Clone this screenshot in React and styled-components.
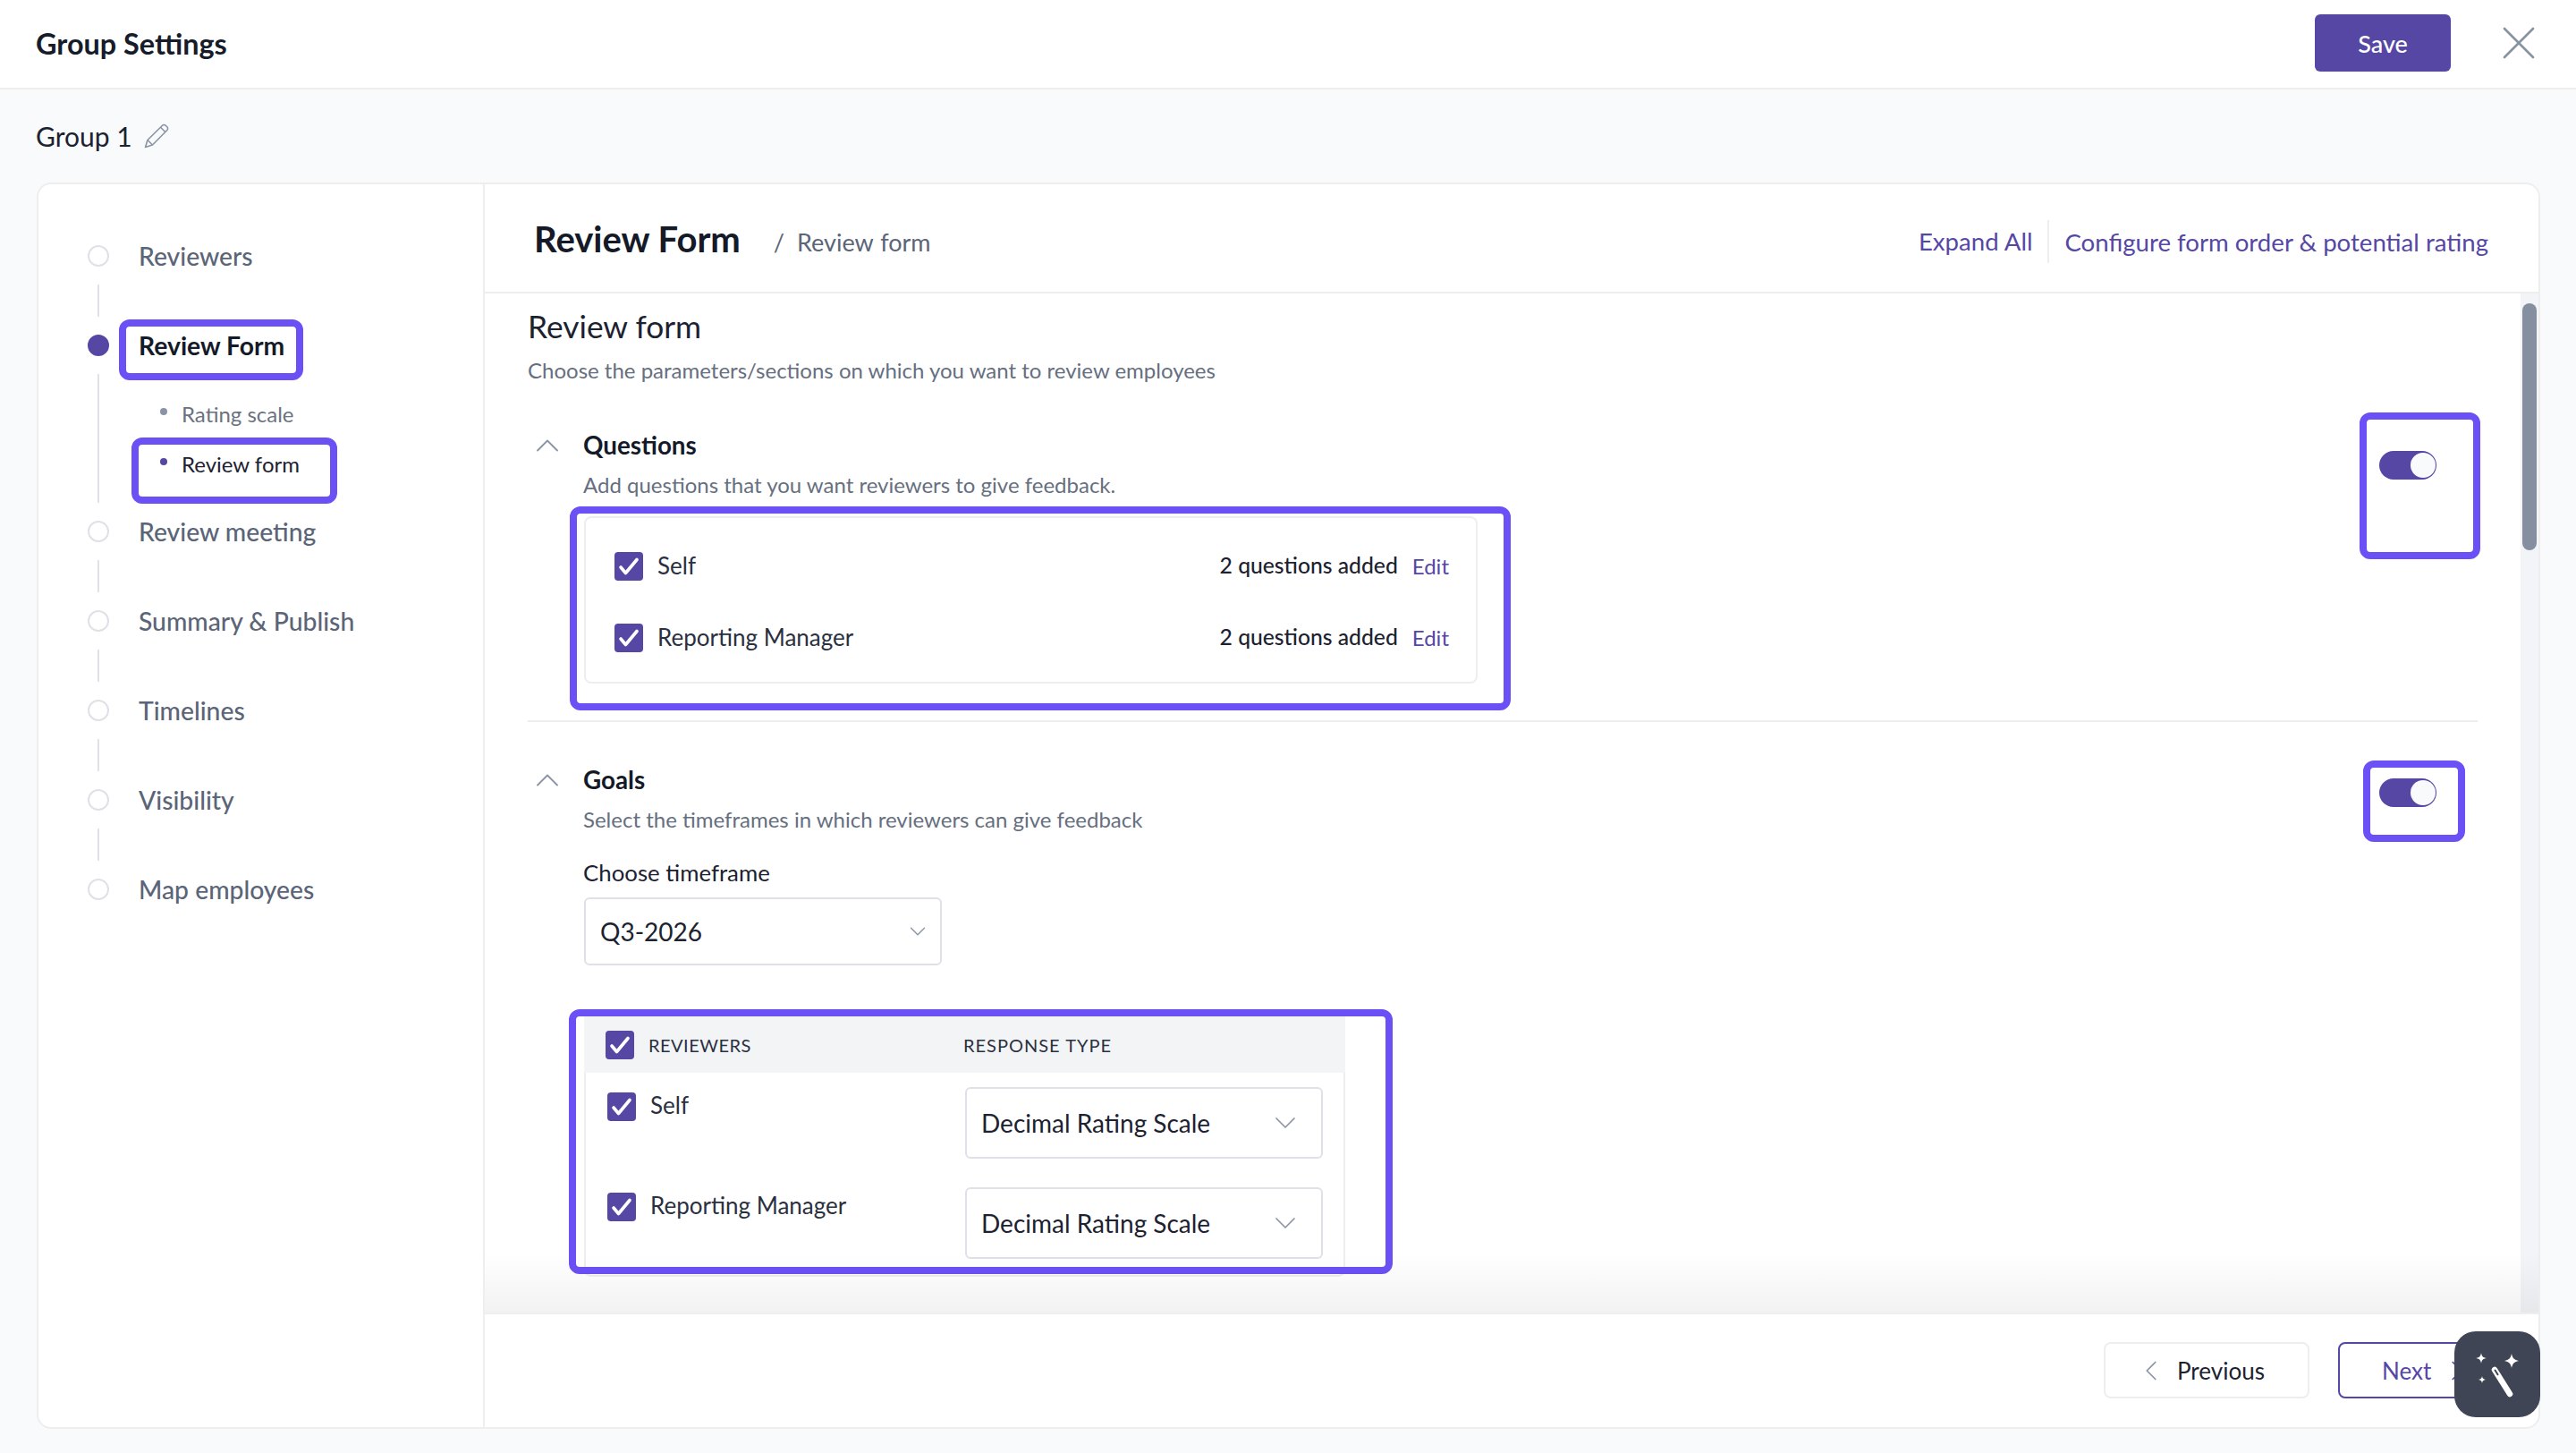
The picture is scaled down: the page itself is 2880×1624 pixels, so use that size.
import React from 'react';
import styled, { createGlobalStyle } from 'styled-components';
import { ChevronUp, ChevronDown, ChevronLeft, ChevronRight, X } from 'lucide-react';

const GlobalStyle = createGlobalStyle`
  * { box-sizing: border-box; }
  html, body { margin: 0; padding: 0; height: 100%; background: #f9fafb; overflow: hidden; }
  body { font-family: Lato, "Open Sans", sans-serif; color: #111827; }
`;

const purple = '#5647a5';
const gray = '#5b6577';
const line = '#eeeeee';

const Page = styled.div`
  width: 2880px;
  height: 1624px;
  display: flex;
  flex-direction: column;
  position: relative;
`;

const Header = styled.header`
  height: 100px;
  flex: none;
  display: flex;
  align-items: center;
  padding: 0 32px 2px 40px;
  background: #fff;
  border-bottom: 2px solid ${line};
`;

const HeaderTitle = styled.h1`
  margin: 0;
  flex: 1;
  font-size: 32.4px;
  font-weight: 700;
  color: #161c2a;
`;

const SaveButton = styled.button`
  width: 152px;
  height: 64px;
  border: none;
  border-radius: 6px;
  background: ${purple};
  color: #fff;
  font: 500 27px Lato, sans-serif;
  margin-right: 44px;
`;

const GroupRow = styled.div`
  height: 104px;
  flex: none;
  display: flex;
  align-items: center;
  gap: 13px;
  padding: 0 0 0 40px;
  font-size: 30px;
  color: #1c2230;
`;

const Card = styled.div`
  flex: none;
  height: 1393px;
  margin: 0 40px 0 41px;
  display: flex;
  background: #fff;
  border: 2px solid ${line};
  border-radius: 16px;
  overflow: hidden;
`;

const Sidebar = styled.nav`
  width: 499px;
  flex: none;
  padding: 64px 0 0 55px;
  border-right: 2px solid ${line};
`;

const StepRow = styled.div`
  height: 32px;
  display: flex;
  align-items: center;
  gap: 33px;
  position: relative;
`;

const StepDot = styled.span`
  width: 24px;
  height: 24px;
  flex: none;
  border-radius: 50%;
  background: ${({ $active }) => ($active ? purple : '#fff')};
  border: 2px solid ${({ $active }) => ($active ? purple : '#e0e1e8')};
`;

const StepLabel = styled.span`
  font-size: 28.3px;
  font-weight: ${({ $active }) => ($active ? 700 : 500)};
  color: ${({ $active }) => ($active ? '#141a28' : gray)};
`;

const Connector = styled.div`
  width: 2px;
  height: ${({ $height }) => $height || 36}px;
  margin: 16px 0 16px 11px;
  background: #e0e1e8;
  flex: none;
`;

const SubGroup = styled.div`
  display: flex;
`;

const SubList = styled.div`
  display: flex;
  flex-direction: column;
  gap: 24px;
  padding: 44px 0 0 68px;
`;

const SubRow = styled.div`
  height: 32px;
  display: flex;
  align-items: center;
  gap: 16px;
  position: relative;
  font-size: 24px;
  color: ${({ $active }) => ($active ? '#1c2230' : '#6b7280')};
`;

const SubDot = styled.span`
  width: 8px;
  height: 8px;
  border-radius: 50%;
  margin-top: -4px;
  background: ${({ $active }) => ($active ? purple : '#8a94a6')};
`;

// the bright annotation frames drawn on top of the screenshot
const Highlight = styled.div`
  position: absolute;
  left: ${({ $left }) => $left}px;
  top: ${({ $top }) => $top}px;
  width: ${({ $w }) => $w}px;
  height: ${({ $h }) => $h}px;
  border: 8px solid #6b50f6;
  border-radius: 12px;
  z-index: 5;
  pointer-events: none;
`;

const Main = styled.main`
  flex: 1;
  min-width: 0;
  display: flex;
  flex-direction: column;
`;

const MainHead = styled.div`
  height: 122px;
  flex: none;
  display: flex;
  align-items: center;
  padding: 8px 56px 0 55px;
  border-bottom: 2px solid ${line};
`;

const MainTitle = styled.h2`
  margin: -6px 0 0;
  font-size: 40px;
  font-weight: 700;
  color: #141a28;
`;

const Crumb = styled.span`
  margin-left: 37px;
  font-size: 27px;
  color: ${gray};
  flex: 1;
  word-spacing: 1px;
`;

const CrumbSlash = styled.span`
  margin-right: 14px;
`;

const HeadLink = styled.a`
  font-size: 27.6px;
  color: ${purple};
  &:first-of-type {
    padding-right: 17px;
    border-right: 2px solid ${line};
    margin-right: 17px;
    height: 48px;
    line-height: 48px;
  }
`;

const ScrollArea = styled.div`
  flex: 1;
  min-height: 0;
  display: flex;
  position: relative;
  overflow: hidden;
`;

const ScrollBody = styled.div`
  flex: 1;
  min-width: 0;
  padding: 16px 48px 0;
`;

const Track = styled.div`
  width: 20px;
  flex: none;
  padding: 11px 2px 0;
  background: #f3f4f8;
`;

const Thumb = styled.div`
  height: 276px;
  border-radius: 8px;
  background: #858f9f;
`;

const BottomFade = styled.div`
  position: absolute;
  left: 0;
  right: 0;
  bottom: 0;
  height: 66px;
  background: linear-gradient(to bottom, rgba(0, 0, 0, 0), rgba(0, 0, 0, 0.05));
  z-index: 6;
  pointer-events: none;
`;

const FormTitle = styled.h3`
  margin: 0;
  font-size: 35.3px;
  line-height: 42px;
  padding-bottom: 2px;
  font-weight: 400;
  color: #1c2230;
`;

const Hint = styled.p`
  margin: ${({ $top }) => $top}px 0 0 ${({ $indent }) => $indent || 0}px;
  font-size: 24px;
  line-height: 29px;
  padding-bottom: 3px;
  color: #666f80;
`;

const SectionHead = styled.div`
  height: 32px;
  margin-top: ${({ $top }) => $top}px;
  display: flex;
  align-items: center;
  gap: 18px;
`;

const SectionTitle = styled.span`
  font-size: 27.8px;
  font-weight: 700;
  color: #141a28;
  margin-bottom: 1px;
`;

const Toggle = styled.div`
  width: 64px;
  height: 32px;
  margin: ${({ $top }) => $top}px 46px 0 auto;
  align-self: flex-start;
  flex: none;
  border-radius: 16px;
  background: ${purple};
  position: relative;
  display: flex;
  align-items: center;
  justify-content: flex-end;
  padding-right: 1px;
`;

const Knob = styled.span`
  width: 28px;
  height: 28px;
  border-radius: 50%;
  background: #f9fafb;
`;

const QuestionBox = styled.div`
  width: 999px;
  height: 187px;
  margin: 18px 0 0 63px;
  padding: 38px 30px 0 32px;
  display: flex;
  flex-direction: column;
  gap: 48px;
  border: 2px solid ${line};
  border-radius: 8px;
  position: relative;
`;

const QuestionRow = styled.div`
  height: 32px;
  display: flex;
  align-items: center;
  gap: 16px;
`;

const Box = styled.span`
  width: 32px;
  height: 32px;
  flex: none;
  border-radius: 4px;
  background: ${purple};
  display: flex;
  align-items: center;
  justify-content: center;
`;

const RowLabel = styled.span`
  font-size: 26px;
  color: #2a3040;
  margin-top: -2px;
`;

const Added = styled.span`
  margin-left: auto;
  font-size: 24.7px;
  font-weight: 500;
  color: #1c2230;
  margin-top: -4px;
`;

const EditLink = styled.a`
  font-size: 24px;
  color: ${purple};
  margin-top: -2px;
`;

const Rule = styled.hr`
  margin: 41px 0 0;
  border: none;
  height: 2px;
  background: ${line};
`;

const FieldLabel = styled.div`
  margin: 27px 0 0 62px;
  font-size: 25.8px;
  line-height: 30px;
  padding-bottom: 2px;
  color: #1c2230;
`;

const Select = styled.div`
  width: 400px;
  height: ${({ $height }) => $height}px;
  margin-left: ${({ $indent }) => $indent || 0}px;
  margin-top: ${({ $top }) => $top || 0}px;
  display: flex;
  align-items: center;
  justify-content: space-between;
  padding: 0 ${({ $pad }) => $pad}px 0 16px;
  border: 2px solid #e0e1e8;
  border-radius: 6px;
  font-size: 28px;
  color: #1c2230;
  background: #fff;
`;

const Table = styled.div`
  width: 851px;
  margin: 57px 0 0 63px;
  border: 2px solid ${line};
  border-top: none;
  border-radius: 0 0 8px 8px;
  position: relative;
`;

const TableHead = styled.div`
  height: 63px;
  display: grid;
  grid-template-columns: 400px 1fr;
  align-items: center;
  padding-left: 24px;
  background: #f3f4f6;
  margin: 0 -2px;
`;

const HeadCell = styled.div`
  display: flex;
  align-items: center;
  gap: 16px;
  font-size: 20px;
  letter-spacing: ${({ $spacing }) => $spacing}px;
  color: #2a3040;
`;

const TableRows = styled.div`
  display: flex;
  flex-direction: column;
  gap: 32px;
  padding: 16px 0 18px 24px;
`;

const TableRow = styled.div`
  display: grid;
  grid-template-columns: 400px 400px;
`;

const ReviewerCell = styled.div`
  display: flex;
  gap: 16px;
  padding-top: 6px;
`;

const Footer = styled.div`
  height: 128px;
  flex: none;
  display: flex;
  justify-content: flex-end;
  gap: 32px;
  padding: 31px 56px 0 0;
  border-top: 2px solid ${line};
`;

const NavButton = styled.button`
  width: ${({ $w }) => $w}px;
  height: 63px;
  display: flex;
  align-items: center;
  gap: 10px;
  padding: 0 0 0 ${({ $pad }) => $pad}px;
  background: #fff;
  border-radius: 8px;
  border: 2px solid ${({ $primary }) => ($primary ? purple : line)};
  color: ${({ $primary }) => ($primary ? purple : '#1c2230')};
  font: 400 26px Lato, sans-serif;
`;

const WandButton = styled.div`
  position: absolute;
  left: 2744px;
  top: 1488px;
  width: 96px;
  height: 96px;
  border-radius: 24px;
  background: #3f4554;
  z-index: 10;
`;

const Check = () => (
  <svg width="32" height="32" viewBox="0 0 32 32" fill="none">
    <path d="M7 17l5.500 6.500L25 8.500" stroke="#fff" strokeWidth="3.6" strokeLinecap="round" strokeLinejoin="round" />
  </svg>
);

const PencilIcon = () => (
  <svg width="28" height="28" viewBox="0 0 28 28" fill="none" stroke="#8a94a6" strokeWidth="1.6" strokeLinejoin="round">
    <path d="M1.5 26.5l2.5-8L20.5 2.2a2.6 2.6 0 0 1 3.7 0l1.6 1.6a2.6 2.6 0 0 1 0 3.7L9.5 24z" />
    <path d="M4 18.5l5.5 5.5M18.5 4.3l5.2 5.2" />
  </svg>
);

const WandIcon = () => (
  <svg width="96" height="96" viewBox="0 0 96 96" fill="#fff">
    <path d="M64 25c1 5 3 7 8 8-5 1-7 3-8 8-1-5-3-7-8-8 5-1 7-3 8-8z" />
    <path d="M30 24c.6 4 2 5.400 6 6-4 .6-5.400 2-6 6-.6-4-2-5.400-6-6 4-.6 5.400-2 6-6z" />
    <path d="M31 50c.4 2.600 1.400 3.600 4 4-2.600.4-3.600 1.400-4 4-.4-2.600-1.400-3.600-4-4 2.600-.4 3.600-1.400 4-4z" />
    <path d="M45 43l17 27" stroke="#fff" strokeWidth="6.500" strokeLinecap="round" />
    <path d="M45.500 43.500l3 4.800" stroke="#3f4554" strokeWidth="2" strokeLinecap="round" />
  </svg>
);

const steps = [
  { label: 'Summary & Publish' },
  { label: 'Timelines' },
  { label: 'Visibility' },
];

const Step = ({ label, active, children }) => (
  <StepRow>
    <StepDot $active={active} />
    <StepLabel $active={active}>{label}</StepLabel>
    {children}
  </StepRow>
);

const App = () => {
  return (
    <Page>
      <GlobalStyle />
      <Header>
        <HeaderTitle>Group Settings</HeaderTitle>
        <SaveButton>Save</SaveButton>
        <X size={64} color="#8a94a0" strokeWidth={1} />
      </Header>

      <GroupRow>
        Group 1
        <PencilIcon />
      </GroupRow>

      <Card>
        <Sidebar>
          <Step label="Reviewers" />
          <Connector />
          <Step label="Review Form" active>
            <Highlight $left={35} $top={-13} $w={206} $h={68} />
          </Step>
          <SubGroup>
            <Connector $height={144} />
            <SubList>
              <SubRow>
                <SubDot />
                Rating scale
              </SubRow>
              <SubRow $active>
                <SubDot $active />
                Review form
                <Highlight $left={-32} $top={-13} $w={230} $h={74} />
              </SubRow>
            </SubList>
          </SubGroup>
          <Step label="Review meeting" />
          <Connector />
          {steps.map((s) => (
            <React.Fragment key={s.label}>
              <Step label={s.label} />
              <Connector />
            </React.Fragment>
          ))}
          <Step label="Map employees" />
        </Sidebar>

        <Main>
          <MainHead>
            <MainTitle>Review Form</MainTitle>
            <Crumb>
              <CrumbSlash>/</CrumbSlash>Review form
            </Crumb>
            <HeadLink>Expand All</HeadLink>
            <HeadLink>Configure form order &amp; potential rating</HeadLink>
          </MainHead>

          <ScrollArea>
            <ScrollBody>
              <FormTitle>Review form</FormTitle>
              <Hint $top={11}>Choose the parameters/sections on which you want to review employees</Hint>

              <SectionHead $top={51}>
                <ChevronUp size={44} color="#8a94a6" strokeWidth={1} />
                <SectionTitle>Questions</SectionTitle>
                <Toggle $top={22}>
                  <Knob />
                  <Highlight $left={-22} $top={-43} $w={135} $h={164} />
                </Toggle>
              </SectionHead>
              <Hint $top={13} $indent={62}>Add questions that you want reviewers to give feedback.</Hint>
              <QuestionBox>
                <Highlight $left={-18} $top={-13} $w={1052} $h={228} />
                <QuestionRow>
                  <Box><Check /></Box>
                  <RowLabel>Self</RowLabel>
                  <Added>2 questions added</Added>
                  <EditLink>Edit</EditLink>
                </QuestionRow>
                <QuestionRow>
                  <Box><Check /></Box>
                  <RowLabel>Reporting Manager</RowLabel>
                  <Added>2 questions added</Added>
                  <EditLink>Edit</EditLink>
                </QuestionRow>
              </QuestionBox>
              <Rule />

              <SectionHead $top={49}>
                <ChevronUp size={44} color="#8a94a6" strokeWidth={1} />
                <SectionTitle>Goals</SectionTitle>
                <Toggle $top={14}>
                  <Knob />
                  <Highlight $left={-18} $top={-20} $w={114} $h={91} />
                </Toggle>
              </SectionHead>
              <Hint $top={13} $indent={62}>Select the timeframes in which reviewers can give feedback</Hint>
              <FieldLabel>Choose timeframe</FieldLabel>
              <Select $height={76} $indent={63} $top={11} $pad={10}>
                Q3-2026
                <ChevronDown size={30} color="#8a94a6" strokeWidth={1.1} />
              </Select>

              <Table>
                <Highlight $left={-19} $top={-8} $w={921} $h={296} />
                <TableHead>
                  <HeadCell $spacing={0.5}>
                    <Box><Check /></Box>
                    REVIEWERS
                  </HeadCell>
                  <HeadCell $spacing={1}>RESPONSE TYPE</HeadCell>
                </TableHead>
                <TableRows>
                  <TableRow>
                    <ReviewerCell>
                      <Box><Check /></Box>
                      <RowLabel>Self</RowLabel>
                    </ReviewerCell>
                    <Select $height={80} $pad={20}>
                      Decimal Rating Scale
                      <ChevronDown size={40} color="#8a94a6" strokeWidth={1} />
                    </Select>
                  </TableRow>
                  <TableRow>
                    <ReviewerCell>
                      <Box><Check /></Box>
                      <RowLabel>Reporting Manager</RowLabel>
                    </ReviewerCell>
                    <Select $height={80} $pad={20}>
                      Decimal Rating Scale
                      <ChevronDown size={40} color="#8a94a6" strokeWidth={1} />
                    </Select>
                  </TableRow>
                </TableRows>
              </Table>
            </ScrollBody>
            <Track>
              <Thumb />
            </Track>
            <BottomFade />
          </ScrollArea>

          <Footer>
            <NavButton $w={230} $pad={32}>
              <ChevronLeft size={38} color="#8a94a6" strokeWidth={1.1} />
              Previous
            </NavButton>
            <NavButton $w={168} $primary $pad={47}>
              Next
              <ChevronRight size={38} color={purple} strokeWidth={1.1} />
            </NavButton>
          </Footer>
        </Main>
      </Card>

      <WandButton>
        <WandIcon />
      </WandButton>
    </Page>
  );
};

export default App;
